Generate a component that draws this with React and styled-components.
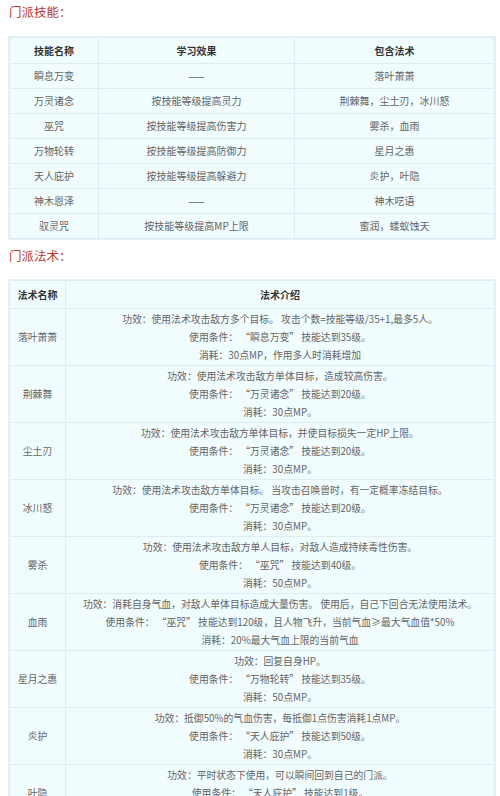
import React from "react";
import styled, { createGlobalStyle } from "styled-components";

const GlobalStyle = createGlobalStyle`
  html, body {
    margin: 0;
    padding: 0;
    background: #ffffff;
  }
  body {
    font-family: "Noto Sans CJK SC", "Liberation Sans", sans-serif;
    color: #555;
  }
`;

const Page = styled.div`
  padding: 3px 5px 0 9px;
`;

const Heading = styled.h3`
  margin: 0;
  padding-top: ${p => p.$top || 0}px;
  height: ${p => p.$h}px;
  font-size: 12.5px;
  line-height: 18px;
  font-weight: normal;
  color: #b83a2e;
`;

const Table = styled.table`
  width: 100%;
  border-collapse: collapse;
  background: #f1fcfe;
  outline: 1px solid #e6f3f6;
  table-layout: fixed;
`;

const Th = styled.th`
  width: ${p => p.$w || "auto"};
  height: ${p => p.$h}px;
  padding: 0;
  font-size: 10px;
  font-weight: bold;
  color: #333;
  text-align: center;
  border: 1px solid #dcecf0;
`;

const Td = styled.td`
  padding: ${p => (p.$tall ? "1px 0" : "0")};
  height: ${p => (p.$tall ? "auto" : "24px")};
  font-size: ${p => (p.$tall ? "9.8px" : "10px")};
  line-height: ${p => (p.$tall ? "18px" : "24px")};
  text-align: center;
  color: #646464;
  border: 1px solid #dcecf0;
  white-space: nowrap;
  overflow: hidden;
`;

const Line = styled.div`
  display: block;
`;

const skills = [
  ["瞬息万变", "——", "落叶萧萧"],
  ["万灵诸念", "按技能等级提高灵力", "荆棘舞，尘土刃，冰川怒"],
  ["巫咒", "按技能等级提高伤害力", "雾杀，血雨"],
  ["万物轮转", "按技能等级提高防御力", "星月之惠"],
  ["天人庇护", "按技能等级提高躲避力", "炎护，叶隐"],
  ["神木恩泽", "——", "神木呓语"],
  ["驭灵咒", "按技能等级提高MP上限", "蜜润，蝼蚁蚀天"],
];

const spells = [
  ["落叶萧萧", [
    "功效：使用法术攻击敌方多个目标。 攻击个数=技能等级/35+1,最多5人。",
    "使用条件： “瞬息万变” 技能达到35级。",
    "消耗：30点MP，作用多人时消耗增加",
  ]],
  ["荆棘舞", [
    "功效：使用法术攻击敌方单体目标，造成较高伤害。",
    "使用条件： “万灵诸念” 技能达到20级。",
    "消耗：30点MP。",
  ]],
  ["尘土刃", [
    "功效：使用法术攻击敌方单体目标，并使目标损失一定HP上限。",
    "使用条件： “万灵诸念” 技能达到20级。",
    "消耗：30点MP。",
  ]],
  ["冰川怒", [
    "功效：使用法术攻击敌方单体目标。 当攻击召唤兽时，有一定概率冻结目标。",
    "使用条件： “万灵诸念” 技能达到20级。",
    "消耗：30点MP。",
  ]],
  ["雾杀", [
    "功效：使用法术攻击敌方单人目标，对敌人造成持续毒性伤害。",
    "使用条件： “巫咒” 技能达到40级。",
    "消耗：50点MP。",
  ]],
  ["血雨", [
    "功效：消耗自身气血，对敌人单体目标造成大量伤害。 使用后，自己下回合无法使用法术。",
    "使用条件： “巫咒” 技能达到120级，且人物飞升，当前气血≥最大气血值*50%",
    "消耗：20%最大气血上限的当前气血",
  ]],
  ["星月之惠", [
    "功效：回复自身HP。",
    "使用条件： “万物轮转” 技能达到35级。",
    "消耗：50点MP。",
  ]],
  ["炎护", [
    "功效：抵御50%的气血伤害，每抵御1点伤害消耗1点MP。",
    "使用条件： “天人庇护” 技能达到50级。",
    "消耗：30点MP。",
  ]],
  ["叶隐", [
    "功效：平时状态下使用，可以瞬间回到自己的门派。",
    "使用条件： “天人庇护” 技能达到1级。",
    "消耗：30点MP。",
  ]],
];

export default function App() {
  return (
    <>
      <GlobalStyle />
      <Page>
        <Heading $h={34}>门派技能：</Heading>
        <Table>
          <thead>
            <tr>
              <Th $w="88px" $h={25}>技能名称</Th>
              <Th $w="195px" $h={25}>学习效果</Th>
              <Th $h={25}>包含法术</Th>
            </tr>
          </thead>
          <tbody>
            {skills.map(row => (
              <tr key={row[0]}>
                {row.map((cell, i) => (
                  <Td key={i}>{cell}</Td>
                ))}
              </tr>
            ))}
          </tbody>
        </Table>
        <Heading $top={8} $h={33}>门派法术：</Heading>
        <Table>
          <thead>
            <tr>
              <Th $w="55px" $h={27}>法术名称</Th>
              <Th $h={27}>法术介绍</Th>
            </tr>
          </thead>
          <tbody>
            {spells.map(([name, lines]) => (
              <tr key={name}>
                <Td $tall>{name}</Td>
                <Td $tall>
                  {lines.map(l => (
                    <Line key={l}>{l}</Line>
                  ))}
                </Td>
              </tr>
            ))}
          </tbody>
        </Table>
      </Page>
    </>
  );
}
